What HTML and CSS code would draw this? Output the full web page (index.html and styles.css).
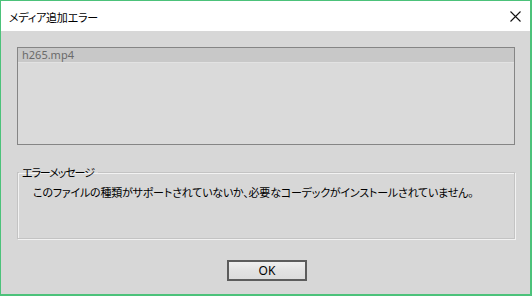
FILE: index.html
```html
<!DOCTYPE html>
<html lang="ja">
<head>
<meta charset="utf-8">
<link rel="stylesheet" href="styles.css">
</head>
<body>
<div class="window">
  <div class="titlebar">
    <span class="title">メディア追加エラー</span>
    <svg class="close" width="11" height="11" viewBox="0 0 11 11"><path d="M0.5 0.5L10.5 10.5M10.5 0.5L0.5 10.5" stroke="#111" stroke-width="1.1" fill="none"/></svg>
  </div>
  <div class="content">
    <div class="listbox">
      <div class="row">h265.mp4</div>
    </div>
    <fieldset class="group">
      <legend class="legend">エラーメッセージ</legend>
      <p class="message">このファイルの種類がサポートされていないか、必要なコーデックがインストールされていません。</p>
    </fieldset>
    <div class="buttons">
      <button class="ok">OK</button>
    </div>
  </div>
</div>
</body>
</html>
```
FILE: styles.css
```css
html, body {
  margin: 0;
  padding: 0;
  width: 532px;
  height: 296px;
  overflow: hidden;
}
body {
  font-family: "Noto Sans CJK JP", "Noto Sans", sans-serif;
  font-feature-settings: "palt";
  font-size: 12px;
  color: #000;
}
.window {
  box-sizing: border-box;
  width: 532px;
  height: 296px;
  border-style: solid;
  border-color: #4cc27a;
  border-width: 1px 2px 2px 1px;
  background: #d7d7d7;
  display: flex;
  flex-direction: column;
}
.titlebar {
  height: 30px;
  background: #fff;
  display: flex;
  align-items: center;
  justify-content: space-between;
  padding: 0 9px 0 8px;
  flex: none;
}
.title {
  font-size: 11px;
  line-height: 14px;
  margin-top: 1px;
  letter-spacing: -0.2px;
}
.close {
  display: block;
}
.content {
  padding: 16px 15px 13px 16px;
  display: flex;
  flex-direction: column;
}
.listbox {
  box-sizing: border-box;
  height: 98px;
  border: 1px solid #858585;
  background: #dadada;
}
.row {
  height: 14px;
  line-height: 14px;
  background: #c8c8c8;
  border-bottom: 1px solid #e2e2e2;
  color: #6a6a6a;
  font-family: "Noto Sans", sans-serif;
  font-size: 11px;
  padding-left: 4px;
}
.group {
  box-sizing: border-box;
  margin: 20px 0 0 0;
  padding: 0 0 0 15px;
  height: 74px;
  border: 1px solid #c3c3c3;
  box-shadow: 1px 1px 0 #f2f2f2, inset 1px 1px 0 #f2f2f2;
  min-width: 0;
}
.legend {
  padding: 0 4px 0 3px;
  margin-left: -14px;
  font-size: 11px;
  line-height: 14px;
  letter-spacing: -1.1px;
}
.message {
  margin: 6px 0 0 0;
  font-size: 11px;
  line-height: 14px;
  letter-spacing: -0.2px;
  white-space: nowrap;
}
.buttons {
  display: flex;
  justify-content: center;
  margin-top: 21px;
}
.ok {
  box-sizing: border-box;
  width: 80px;
  height: 21px;
  margin-left: 2px;
  border: 2px solid #5c5c5c;
  background: linear-gradient(#efefef, #e2e2e2 50%, #dcdcdc);
  font-family: "Noto Sans", sans-serif;
  font-size: 12px;
  line-height: 15px;
  color: #000;
  padding: 0;
}
```
